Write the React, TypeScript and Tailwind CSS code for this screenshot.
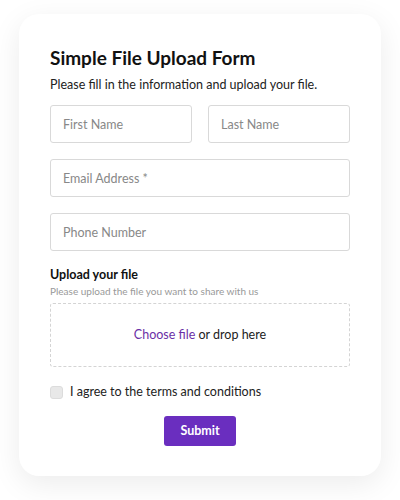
export default function App() {
  return (
    <div className="min-h-[500px] w-[400px] bg-white pt-[14px] px-[19px]" style={{ fontFamily: 'Lato, "Noto Sans", sans-serif' }}>
      <div className="rounded-[20px] bg-white px-[31px] pt-[32px] pb-[30px] shadow-[0_8px_30px_rgba(0,0,0,0.08)]">
        <h1 className="text-[19px] font-bold leading-[24px] text-[#111]">Simple File Upload Form</h1>
        <p className="mt-[6px] text-[12.5px] leading-[18px] text-[#222]">Please fill in the information and upload your file.</p>
        <div className="mt-[11px] grid grid-cols-2 gap-4">
          <input className="h-[38px] rounded-[3px] border border-[#d9d9d9] px-3 text-[12.5px] placeholder:text-[#888] outline-none" placeholder="First Name" />
          <input className="h-[38px] rounded-[3px] border border-[#d9d9d9] px-3 text-[12.5px] placeholder:text-[#888] outline-none" placeholder="Last Name" />
        </div>
        <input className="mt-4 block h-[38px] w-full rounded-[3px] border border-[#d9d9d9] px-3 text-[12.5px] placeholder:text-[#888] outline-none" placeholder="Email Address *" />
        <input className="mt-4 block h-[38px] w-full rounded-[3px] border border-[#d9d9d9] px-3 text-[12.5px] placeholder:text-[#888] outline-none" placeholder="Phone Number" />
        <div className="mt-[16px] text-[12.5px] font-bold leading-[16px] text-[#111]">Upload your file</div>
        <div className="mt-[1px] text-[10px] leading-[14px] text-[#999]">Please upload the file you want to share with us</div>
        <div className="mt-[5px] flex h-[64px] items-center justify-center rounded-[3px] border border-dashed border-[#d4d4d4] text-[12.5px] text-[#222]">
          <span className="text-[#6b2fa6]">Choose file</span>&nbsp;or drop here
        </div>
        <label className="mt-[18px] flex items-center gap-[7px] text-[12.5px] leading-[14px] text-[#222]">
          <span className="h-[13px] w-[13px] rounded-[3px] border border-[#dcdcdc] bg-[#e8e8e8]" />
          I agree to the terms and conditions
        </label>
        <div className="mt-[17px] flex justify-center">
          <button className="h-[30px] w-[72px] rounded-[3px] bg-[#6a2ebf] text-[12.5px] font-bold text-white">Submit</button>
        </div>
      </div>
    </div>
  )
}
